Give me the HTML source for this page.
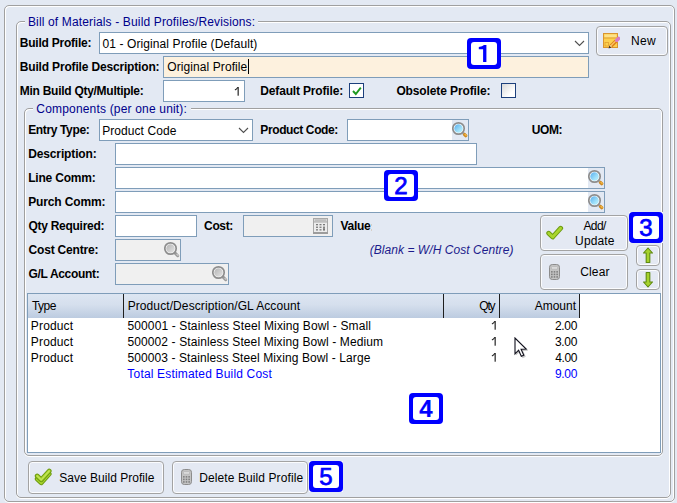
<!DOCTYPE html>
<html><head><meta charset="utf-8">
<style>
*{box-sizing:border-box;margin:0;padding:0}
html,body{width:677px;height:503px;overflow:hidden}
body{background:#e3e9f3;font-family:"Liberation Sans",sans-serif;font-size:12px;color:#000;position:relative}
.abs{position:absolute}
.et{position:absolute;border:1px solid #a0a0a0;box-shadow:inset 1px 1px 0 #fff,inset -1px 0 0 #fff,0 1px 0 #fff}
.cut{position:absolute;background:#e3e9f3;height:3px}
.tx{position:absolute;font-size:12px;line-height:14px;white-space:nowrap}
.in{position:absolute;background:#fff;border:1px solid #7f9db9;height:22px}
.dis{background:#f0f0f0}
.sb{position:absolute;right:0;top:0;width:16px;height:20px;background:#e3e9f3}
.btn{position:absolute;border:1px solid #a3a3a3;border-radius:4px;background:#e4e9f3;box-shadow:inset 0 0 0 1px #fbfcfe}
.mk{position:absolute;width:34px;height:31px;background:#fff}
.mk:before{content:"";position:absolute;left:0;top:0;width:34px;height:31px;border-radius:4px;background:#0000ff}
.mk i{position:absolute;left:4px;top:4px;width:26px;height:23px;border-radius:3px;background:#fff;color:#0000ff;font-style:normal;font-weight:normal;font-size:24px;line-height:24px;text-align:center;-webkit-text-stroke:0.75px #0000ff}
.mk i.bd{font-weight:bold;-webkit-text-stroke:0.2px #0000ff}
.chk{position:absolute;width:15px;height:15px;border:1px solid #1c3f7c;background:#fff}
.vd{position:absolute;top:294px;width:1px;height:24px;background:#1e1e1e}
</style></head><body>
<svg width="0" height="0" style="position:absolute">
<defs>
<linearGradient id="lens" x1="0" y1="0" x2="1" y2="1"><stop offset="0" stop-color="#58aeee"/><stop offset="0.7" stop-color="#a8e6fa"/><stop offset="1" stop-color="#b4ecfb"/></linearGradient>
<linearGradient id="lensg" x1="0" y1="0" x2="1" y2="1"><stop offset="0" stop-color="#b4b4b4"/><stop offset="1" stop-color="#e4e4e4"/></linearGradient>
<g id="mag"><path d="M10.4 11.4 L12.6 13.6" stroke="#a9adb5" stroke-width="2.6"/><path d="M12.6 13.6 L13.7 14.7" stroke="#cf8a22" stroke-width="3.3" stroke-linecap="round"/><path d="M13 13.3 L14.1 14.4" stroke="#f8bf48" stroke-width="1.2" stroke-linecap="round"/><circle cx="6.5" cy="7.5" r="5.7" fill="#fff" stroke="#8d8d8d" stroke-width="1.7"/><circle cx="6.5" cy="7.5" r="4.25" fill="url(#lens)"/></g>
<g id="magg"><path d="M10.4 11.4 L13.7 14.7" stroke="#9a9a9a" stroke-width="3" stroke-linecap="round"/><path d="M12.9 13.3 L14 14.4" stroke="#cfcfcf" stroke-width="1.2" stroke-linecap="round"/><circle cx="6.5" cy="7.5" r="5.7" fill="#fafafa" stroke="#8d8d8d" stroke-width="1.7"/><circle cx="6.5" cy="7.5" r="4.25" fill="url(#lensg)"/></g>
<g id="calc"><rect x="1.5" y="0.5" width="10" height="15" rx="2.8" fill="#c4c4c4" stroke="#8c8c8c"/><rect x="3.3" y="2.6" width="6.4" height="2.6" rx="1" fill="#dedede" stroke="#a2a2a2" stroke-width=".5"/><g fill="#7e7e7e" transform="translate(0.6,0.2) scale(0.98)"><rect x="2.5" y="7" width="1.6" height="1.6"/><rect x="5.2" y="7" width="1.6" height="1.6"/><rect x="7.9" y="7" width="1.6" height="1.6"/><rect x="2.5" y="9.6" width="1.6" height="1.6"/><rect x="5.2" y="9.6" width="1.6" height="1.6"/><rect x="7.9" y="9.6" width="1.6" height="1.6"/><rect x="2.5" y="12.2" width="1.6" height="1.6"/><rect x="5.2" y="12.2" width="1.6" height="1.6"/><rect x="7.9" y="12.2" width="1.6" height="1.6"/></g></g>
<g id="one"><rect x="3.6" y="0" width="1.1" height="8.7" fill="#111"/><path d="M0.9 3.1 Q2.9 2.2 3.9 0.2" fill="none" stroke="#222" stroke-width="1.05"/></g>
<g id="ck"><path d="M2.2 8.2 L6.2 12 L14.2 3.2" fill="none" stroke="#6c9a10" stroke-width="4.8" stroke-linejoin="round" stroke-linecap="round"/><path d="M2.2 8.2 L6.2 12 L14.2 3.2" fill="none" stroke="#a9d62e" stroke-width="2.8" stroke-linejoin="round" stroke-linecap="round"/></g>
</defs></svg>

<!-- outer panel + group boxes -->
<div class="et" style="left:4px;top:5px;width:671px;height:497px;border-radius:5px"></div>
<div class="et" style="left:16px;top:21px;width:655px;height:477px;border-radius:5px"></div>
<div class="cut" style="left:25px;top:20px;width:233px"></div>
<div class="et" style="left:24px;top:108px;width:639px;height:348px;border-radius:5px"></div>
<div class="cut" style="left:33px;top:107px;width:158px"></div>

<!-- row 1 -->
<div class="in" style="left:99px;top:32px;width:490px"></div>
<svg class="abs" style="left:574px;top:40px" width="11" height="7"><path d="M1 1 L5.5 5.5 L10 1" fill="none" stroke="#505050" stroke-width="1.1"/></svg>
<!-- New button -->
<div class="btn" style="left:596px;top:26px;width:72px;height:30px"></div>
<svg class="abs" style="left:603px;top:33px" width="17" height="16" viewBox="0 0 17 16">
<rect x="0.5" y="0.5" width="14" height="14" fill="#fcd04f" stroke="#d9952f"/>
<rect x="1.5" y="1.5" width="12" height="3" fill="#fde28a"/>
<rect x="1" y="4.5" width="13" height="1" fill="#e0a030"/>
<rect x="2" y="9.5" width="3.5" height="3.5" fill="none" stroke="#e0a030" stroke-width=".8"/>
<path d="M7.2 13.8 L13.6 7.4" stroke="#de7f18" stroke-width="3.6"/><path d="M7.4 13.2 L13.2 7.4" stroke="#fcc865" stroke-width="1.3"/>
<path d="M12.9 8.1 L13.9 7.1" stroke="#c9ccd6" stroke-width="3.6"/>
<path d="M13.8 7.2 L15.6 5.4" stroke="#d77cc4" stroke-width="3.6" stroke-linecap="round"/><path d="M5.6 15.4 L6.4 12.6 L8.4 14.6 Z" fill="#3c3228"/><path d="M6.4 12.6 L8.4 14.6 L9 14 L7 12 Z" fill="#f0d9a8"/>
</svg>

<!-- row 2 -->
<div class="in" style="left:163px;top:56px;width:426px;background:#fdf1de"></div>
<div class="abs" style="left:248px;top:59px;width:1px;height:15px;background:#000"></div>

<!-- row 3 -->
<div class="in" style="left:163px;top:80px;width:82px"></div>
<div class="chk" style="left:349px;top:83px"></div>
<svg class="abs" style="left:352px;top:86px" width="10" height="10"><path d="M1 5 L3.8 8 L8.8 1.6" fill="none" stroke="#1f9a1f" stroke-width="1.9"/></svg>
<div class="chk" style="left:501px;top:83px;background:linear-gradient(135deg,#d8d8d8,#fff 70%)"></div>

<!-- components -->
<div class="in" style="left:99px;top:119px;width:154px"></div>
<svg class="abs" style="left:238px;top:127px" width="11" height="7"><path d="M1 1 L5.5 5.5 L10 1" fill="none" stroke="#505050" stroke-width="1.1"/></svg>
<div class="in" style="left:347px;top:119px;width:122px"><div class="sb"></div></div>
<svg class="abs" style="left:452px;top:121px" width="16" height="18"><use href="#mag"/></svg>

<div class="in" style="left:115px;top:143px;width:362px"></div>
<div class="in" style="left:115px;top:167px;width:490px"><div class="sb"></div></div>
<svg class="abs" style="left:588px;top:169px" width="16" height="18"><use href="#mag"/></svg>
<div class="in" style="left:115px;top:191px;width:490px"><div class="sb"></div></div>
<svg class="abs" style="left:588px;top:193px" width="16" height="18"><use href="#mag"/></svg>

<div class="in" style="left:115px;top:215px;width:82px"></div>
<div class="in dis" style="left:243px;top:215px;width:90px"></div>
<svg class="abs" style="left:312.6px;top:218px" width="15" height="16" viewBox="0 0 15 16">
<rect x="0.5" y="0.5" width="14" height="15" fill="#ececec" stroke="#a8a8a8"/>
<rect x="0.5" y="0.5" width="14" height="3.5" fill="#d6d6d6" stroke="#a8a8a8"/>
<rect x="2" y="1.6" width="11" height="1" fill="#b0b0b0"/>
<rect x="0" y="14" width="15" height="2" fill="#9c9c9c"/>
<g fill="#7a7a7a"><rect x="3" y="6" width="2" height="1.3"/><rect x="6.5" y="6" width="2" height="1.3"/><rect x="10" y="6" width="2" height="1.3"/><rect x="3" y="8.6" width="2" height="1.3"/><rect x="6.5" y="8.6" width="2" height="1.3"/><rect x="10" y="8.6" width="2" height="1.3"/><rect x="3" y="11.2" width="2" height="1.3"/><rect x="6.5" y="11.2" width="2" height="1.3"/><rect x="10" y="10.2" width="2" height="2.4"/></g>
</svg>

<div class="in dis" style="left:115px;top:239px;width:66px"></div>
<svg class="abs" style="left:164px;top:241px" width="16" height="18"><use href="#magg"/></svg>
<div class="in dis" style="left:115px;top:263px;width:114px"></div>
<svg class="abs" style="left:212px;top:265px" width="16" height="18"><use href="#magg"/></svg>

<!-- Add/Update, Clear, arrows -->
<div class="btn" style="left:540px;top:215px;width:88px;height:36px"></div>
<svg class="abs" style="left:546px;top:224px" width="18" height="16"><use href="#ck" transform="translate(0.5,1)"/></svg>
<div class="btn" style="left:540px;top:254px;width:88px;height:36px"></div>
<svg class="abs" style="left:548px;top:264px" width="12" height="16"><use href="#calc"/></svg>
<div class="btn" style="left:636px;top:245px;width:24px;height:21px"></div>
<svg class="abs" style="left:642px;top:247px" width="12" height="17"><path d="M6 1 L10.5 6 L7.8 6 L7.8 15.5 L4.2 15.5 L4.2 6 L1.5 6 Z" fill="#a6d22c" stroke="#5f8a10" stroke-width="1.1" stroke-linejoin="round"/></svg>
<div class="btn" style="left:636px;top:269px;width:24px;height:21px"></div>
<svg class="abs" style="left:642px;top:271px" width="12" height="17"><path d="M6 16 L10.5 11 L7.8 11 L7.8 1.5 L4.2 1.5 L4.2 11 L1.5 11 Z" fill="#a6d22c" stroke="#5f8a10" stroke-width="1.1" stroke-linejoin="round"/></svg>

<!-- table -->
<div class="abs" style="left:27px;top:293px;width:634px;height:160px;background:#fff;border:1px solid #7f9db9"></div>
<div class="abs" style="left:28px;top:294px;width:552px;height:24px;background:linear-gradient(#dde6f2,#d5dfed 45%,#bccbe0)"></div>
<div class="vd" style="left:123px"></div><div class="vd" style="left:443px"></div><div class="vd" style="left:499px"></div><div class="vd" style="left:579px"></div>

<!-- bottom buttons -->
<div class="btn" style="left:28px;top:461px;width:136px;height:33px"></div>
<svg class="abs" style="left:34px;top:468px" width="19" height="18"><use href="#ck" transform="translate(1,2.8)"/><use href="#ck" transform="translate(1,-0.2)"/><path d="M3.2 8 L7.2 11.8 L15.2 3" fill="none" stroke="#c3e45a" stroke-width="1.2" stroke-linecap="round" stroke-linejoin="round"/></svg>
<div class="btn" style="left:172px;top:461px;width:136px;height:33px"></div>
<svg class="abs" style="left:180px;top:469px" width="12" height="16"><use href="#calc"/></svg>

<div class="tx" style="left:27.95px;top:15px;letter-spacing:0.145px;color:#00008b;">Bill of Materials - Build Profiles/Revisions:</div>
<div class="tx" style="left:102.59px;top:37px;letter-spacing:0.090px;">01 - Original Profile (Default)</div>
<div class="tx" style="left:167.30px;top:60px;letter-spacing:0.086px;">Original Profile</div>
<div class="tx" style="left:36.34px;top:102px;letter-spacing:0.179px;color:#00008b;">Components (per one unit):</div>
<div class="tx" style="left:102.14px;top:124px;letter-spacing:0.075px;">Product Code</div>
<div class="tx" style="left:631.04px;top:34px;letter-spacing:0.263px;">New</div>
<div class="tx" style="left:583.47px;top:219px;letter-spacing:-0.632px;">Add/</div>
<div class="tx" style="left:575.09px;top:234px;letter-spacing:0.139px;">Update</div>
<div class="tx" style="left:580.13px;top:265px;letter-spacing:0.199px;">Clear</div>
<div class="tx" style="left:369.69px;top:243px;letter-spacing:0.055px;font-style:italic;color:#1c1c8c;">(Blank = W/H Cost Centre)</div>
<div class="tx" style="left:31.96px;top:299px;letter-spacing:-0.508px;">Type</div>
<div class="tx" style="left:127.64px;top:299px;letter-spacing:0.098px;">Product/Description/GL Account</div>
<div class="tx" style="left:479.30px;top:299px;letter-spacing:-1.250px;">Qty</div>
<div class="tx" style="left:534.66px;top:299px;letter-spacing:-0.004px;">Amount</div>
<div class="tx" style="left:30.84px;top:319px;letter-spacing:0.150px;">Product</div>
<div class="tx" style="left:127.44px;top:319px;letter-spacing:0.125px;">500001 - Stainless Steel Mixing Bowl - Small</div>
<div class="tx" style="left:554.95px;top:319px;letter-spacing:-0.308px;">2.00</div>
<div class="tx" style="left:30.84px;top:335px;letter-spacing:0.150px;">Product</div>
<div class="tx" style="left:127.44px;top:335px;letter-spacing:0.111px;">500002 - Stainless Steel Mixing Bowl - Medium</div>
<div class="tx" style="left:554.90px;top:335px;letter-spacing:-0.293px;">3.00</div>
<div class="tx" style="left:30.84px;top:351px;letter-spacing:0.150px;">Product</div>
<div class="tx" style="left:127.44px;top:351px;letter-spacing:0.096px;">500003 - Stainless Steel Mixing Bowl - Large</div>
<div class="tx" style="left:555.34px;top:351px;letter-spacing:-0.438px;">4.00</div>
<div class="tx" style="left:127.36px;top:367px;letter-spacing:0.174px;color:#0000ff;">Total Estimated Build Cost</div>
<div class="tx" style="left:554.93px;top:367px;letter-spacing:-0.303px;color:#0000ff;">9.00</div>
<div class="tx" style="left:59.26px;top:471px;letter-spacing:0.025px;">Save Build Profile</div>
<div class="tx" style="left:199.25px;top:471px;letter-spacing:0.095px;">Delete Build Profile</div>
<div class="tx" style="left:19.80px;top:36px;letter-spacing:-0.226px;font-weight:bold;">Build Profile:</div>
<div class="tx" style="left:19.80px;top:60px;letter-spacing:-0.169px;font-weight:bold;">Build Profile Description:</div>
<div class="tx" style="left:19.80px;top:84px;letter-spacing:-0.274px;font-weight:bold;">Min Build Qty/Multiple:</div>
<div class="tx" style="left:260.30px;top:84px;letter-spacing:-0.161px;font-weight:bold;">Default Profile:</div>
<div class="tx" style="left:396.39px;top:84px;letter-spacing:-0.114px;font-weight:bold;">Obsolete Profile:</div>
<div class="tx" style="left:28.20px;top:123px;letter-spacing:-0.361px;font-weight:bold;">Entry Type:</div>
<div class="tx" style="left:28.20px;top:147px;letter-spacing:-0.130px;font-weight:bold;">Description:</div>
<div class="tx" style="left:28.20px;top:171px;letter-spacing:-0.201px;font-weight:bold;">Line Comm:</div>
<div class="tx" style="left:28.20px;top:195px;letter-spacing:-0.134px;font-weight:bold;">Purch Comm:</div>
<div class="tx" style="left:28.45px;top:219px;letter-spacing:-0.272px;font-weight:bold;">Qty Required:</div>
<div class="tx" style="left:28.49px;top:243px;letter-spacing:-0.175px;font-weight:bold;">Cost Centre:</div>
<div class="tx" style="left:28.49px;top:267px;letter-spacing:-0.312px;font-weight:bold;">G/L Account:</div>
<div class="tx" style="left:260.30px;top:123px;letter-spacing:-0.387px;font-weight:bold;">Product Code:</div>
<div class="tx" style="left:204.09px;top:219px;letter-spacing:-0.359px;font-weight:bold;">Cost:</div>
<div class="tx" style="left:340.57px;top:219px;letter-spacing:-0.340px;font-weight:bold;">Value</div>
<div class="tx" style="left:531.86px;top:123px;letter-spacing:-0.430px;font-weight:bold;">UOM:</div>
<svg class="abs" style="left:233.9px;top:86.8px" width="6" height="10"><use href="#one"/></svg>
<svg class="abs" style="left:490.9px;top:321.3px" width="6" height="10"><use href="#one"/></svg>
<svg class="abs" style="left:490.9px;top:337.3px" width="6" height="10"><use href="#one"/></svg>
<svg class="abs" style="left:490.9px;top:353.3px" width="6" height="10"><use href="#one"/></svg>

<div class="abs" style="left:371px;top:224px;width:1px;height:2px;background:#d6cfc8"></div><div class="abs" style="left:371px;top:229px;width:1px;height:2px;background:#d6cfc8"></div>
<!-- markers -->
<div class="mk" style="left:467px;top:38px"><i></i><svg class="abs" style="left:0;top:0" width="34" height="31"><path d="M19.4 7 L19.4 24 L16.1 24 L16.1 11.2 L11.8 11.3 L11.8 8.9 Q15.6 8.6 17 7 Z" fill="#0000ff"/></svg></div>
<div class="mk" style="left:384px;top:170px"><i>2</i></div>
<div class="mk" style="left:629px;top:212px"><i>3</i></div>
<div class="mk" style="left:409px;top:393px"><i class="bd">4</i></div>
<div class="mk" style="left:309px;top:461px"><i>5</i></div>

<!-- cursor -->
<svg class="abs" style="left:514px;top:337px" width="14" height="22" viewBox="0 0 14 22"><path d="M2.2 2.4 L2.2 17.8 L5.8 14.4 L8.6 20.6 L11.2 19.6 L8.4 13.5 L13.5 13.3 Z" fill="#c8c8c8" stroke="#c8c8c8" stroke-width="1"/><path d="M1 1 L1 16.8 L4.6 13.2 L7.3 19.3 L9.8 18.2 L7.1 12.2 L12.2 12 Z" fill="#fff" stroke="#10101c" stroke-width="1.1"/></svg>
</body></html>
